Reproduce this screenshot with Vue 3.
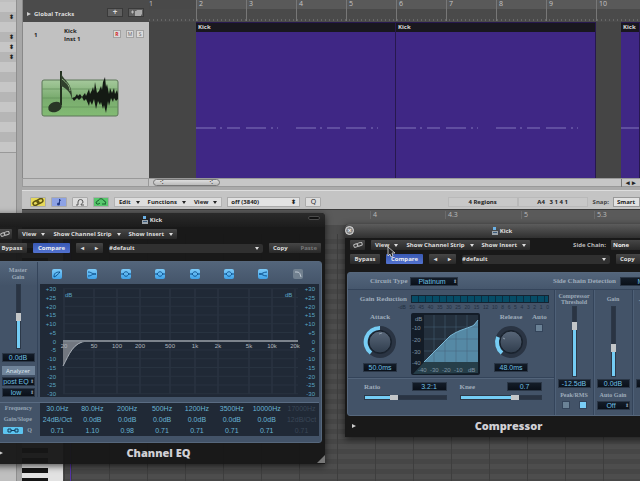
<script setup>
import { ref } from 'vue'

const bars = ['2', '3', '4', '5', '6', '7', '8', '9', '10']
const beats = [
  { x: 305, label: '4' },
  { x: 380, label: '4.3' },
  { x: 456, label: '5' },
  { x: 529, label: '5.3' }
]
const plugins = [
  { id: 'eq', name: 'Channel EQ' },
  { id: 'comp', name: 'Compressor' }
]
const bands = ['cut', 'shelf', 'bell', 'bell', 'bell', 'bell', 'high', 'off']
const bandPaths = {
  cut: 'M2 8C2 4 4 3 8 3M2 8C5 7 6 5 8 3',
  shelf: 'M1 3C5 3 4 5 9 5M1 7C5 7 4 5 9 5',
  bell: 'M0 5h2C4 2 6 2 8 5h2M2 5C4 8 6 8 8 5',
  high: 'M1 5C5 5 5 3 9 3M1 5C5 5 5 7 9 7',
  off: 'M2 3h2C7 3 7 5 8 8'
}
const table = [
  { label: 'Frequency', cells: ['30.0Hz', '80.0Hz', '200Hz', '500Hz', '1200Hz', '3500Hz', '10000Hz', '17000Hz'] },
  { label: 'Gain/Slope', cells: ['24dB/Oct', '0.0dB', '0.0dB', '0.0dB', '0.0dB', '0.0dB', '0.0dB', '12dB/Oct'] },
  { label: 'Q', cells: ['0.71', '1.10', '0.98', '0.71', '0.71', '0.71', '0.71', '0.71'] }
]
const gains = ['+30', '+25', '+20', '+15', '+10', '+5', '0', '-5', '-10', '-15', '-20', '-25', '-30']
const freqs = [
  [24, '20'], [54, '50'], [77, '100'], [100, '200'], [130, '500'],
  [155, '1k'], [178, '2k'], [209, '5k'], [232, '10k'], [255, '20k']
]
const reduction = ['-dB', '50', '45', '40', '35', '30', '25', '20', '15', '12', '10', '8', '6', '5', '4', '3', '2', '1', '0']
const gridX = [434, 445, 456, 467]

const master = ref(50)
const threshold = ref(76)
const makeup = ref(39)
const limiter = ref(90)
const ratio = ref(34)
const knee = ref(69)
const auto = ref(false)
const detect = ref('rms')
</script>

<template>
  <div class="desktop">
    <aside class="sidebar">
      <div class="stripes">
        <span v-for="n in 15" :key="n" class="stripe">{{ [2, 4, 5, 6].includes(n) ? '⬍' : '' }}</span>
      </div>
    </aside>

    <main class="main">
      <section class="arrange">
        <div class="tracks">
          <header class="tracks-head">
            <span class="global"><i class="tri"></i>Global Tracks</span>
            <button class="head-btn" aria-label="Add track">+</button>
            <button class="head-btn" aria-label="Duplicate track">
              <svg width="12" height="7" viewBox="0 0 12 7"><path d="M1 3h3M2.500 1.500v3" stroke="#bbb" /><path d="M5 2h6v5H5zM6 1h6v5" fill="#aaa" /></svg>
            </button>
          </header>
          <article class="track">
            <div class="track-info">
              <span class="track-no">1</span>
              <span class="track-name">Kick<br />Inst 1</span>
              <span class="track-btns">
                <button class="rec">R</button><button>M</button><button>S</button>
              </span>
            </div>
            <svg class="track-icon" width="80" height="48" viewBox="0 0 80 48">
              <defs>
                <linearGradient id="leaf" x1="0" y1="0" x2="0" y2="1">
                  <stop offset="0" stop-color="#a5c99c" /><stop offset="0.500" stop-color="#79ab6e" /><stop offset="1" stop-color="#82bb73" />
                </linearGradient>
              </defs>
              <rect x="2" y="10" width="76" height="36" rx="2" fill="url(#leaf)" stroke="#5d7758" />
              <path d="M2 19h76M2 28h76M2 37h76" stroke="#638f5a" stroke-width="0.700" />
              <path d="M35 27l2-3 1 2 2-2 2 3 3-4 1 3 3-7 1 5 2-4 1-3 1 4 1-9 2 11 2-2 2-5 1 4 1-8 2-5 1 10 1-3 2 10 1-6 2 5 2-5 1 6 2-4 1 4v5l-2 2-2-3-1 4-2-4-2 8-1-5-2 12-2-8-1 4-2-7-1 3-2-4-2 8-2-10-2 6-2-4-1 5-3-7-2 2-2-4-3 3-2-2-3 3-2-3z" fill="#141a14" />
              <path d="M21 1v34" stroke="#22301f" stroke-width="2" />
              <path d="M21 2c1 9 12 8 11 28-1-9-7-12-11-14z" fill="#30402c" /><path d="M22 9c5 4 8 7 8 12" stroke="#91b784" fill="none" />
              <ellipse cx="15" cy="37" rx="7" ry="5" transform="rotate(-20 15 37)" fill="#293526" />
            </svg>
          </article>
        </div>

        <div class="timeline">
          <div class="ruler">
            <span class="bar first">1</span>
            <span v-for="b in bars" :key="b" class="bar">{{ b }}</span>
          </div>
          <div class="lane">
            <div v-for="n in 3" :key="n" class="region" :class="'r' + n">
              <div class="region-head">Kick</div>
              <svg class="notes" width="200" height="2" viewBox="0 0 200 2"><path d="M0 1h20M24 1h2M31 1h13M50 1h20M75 1h2M81 1h1M100 1h20M124 1h2M131 1h13M150 1h20M175 1h2M181 1h1" stroke="#8276bb" /></svg>
            </div>
          </div>
        </div>

        <div class="scroll-left"></div>
        <div class="scroll-row">
          <span class="scroll-thumb"><i>⁖</i><i>⁖</i></span>
          <span class="scroll-arrows">◂ ▸</span>
        </div>
      </section>

      <nav class="toolbar">
        <button class="tool yellow" aria-label="Link"><svg width="12" height="8" viewBox="0 0 12 8"><g fill="none" stroke="#5b5210" stroke-width="1.500"><rect x="1" y="3" width="6" height="4" rx="2" transform="rotate(-25 4 5)" /><rect x="5" y="1" width="6" height="4" rx="2" transform="rotate(-25 8 3)" /></g></svg></button>
        <button class="tool blue" aria-label="MIDI out"><svg width="8" height="8" viewBox="0 0 8 8"><path d="M4.500 1v5M4.500 1l1 2" stroke="#223a86" /><circle cx="3.500" cy="6" r="1.500" fill="#223a86" /></svg></button>
        <button class="tool" aria-label="MIDI in"><svg width="10" height="8" viewBox="0 0 10 8"><path d="M3 7H1M3 7V4a2 2 0 0 1 5 0c0 2-2 1-2 3h3" fill="none" stroke="#555" /></svg></button>
        <button class="tool green" aria-label="Catch"><svg width="12" height="8" viewBox="0 0 12 8"><path d="M1 5C1 3 3 3 3 3C4 0 8 0 9 3C11 3 11 5 10 6M1 5C2 7 4 6 5 5M7 6h4" fill="none" stroke="#17622c" /></svg></button>
        <div class="menu-group">
          <button>Edit<i class="down"></i></button><button>Functions<i class="down"></i></button><button>View<i class="down"></i></button>
        </div>
        <span class="picker division"><select aria-label="Division"><option>off (3840)</option></select><i>⬍</i></span>
        <button class="tool q">Q</button>
        <div class="status"><span>4 Regions</span><span class="pos">A4 &nbsp; 3 1 4 1</span></div>
        <label class="snap">Snap: <select><option>Smart</option></select></label>
      </nav>

      <section class="roll">
        <div class="roll-ruler">
          <span v-for="b in beats" :key="b.label" class="beat" :style="{ left: b.x + 'px' }">{{ b.label }}</span>
        </div>
        <div class="roll-body">
          <div class="keys"></div>
          <div class="grid"><i class="playhead"></i></div>
        </div>
      </section>
    </main>

    <section v-for="p in plugins" :key="p.id" class="window" :class="p.id">
      <header class="titlebar">
        <button v-if="p.id === 'comp'" class="close" aria-label="Close">×</button>
        <svg width="6" height="8" viewBox="0 0 6 8"><path d="M1 0h3v3H1z" fill="#6bb1e6" /><path d="M0 4h6v4H0z" fill="#9aa3ab" /><path d="M1 5h4v1H1z" fill="#38597a" /></svg>
        <span>Kick</span>
        <i v-if="p.id === 'eq'" class="pill"></i>
      </header>
      <div class="row">
        <button class="dark link" aria-label="Link"><svg width="10" height="6" viewBox="0 0 10 6"><g fill="none" stroke="#bbb"><rect x="1" y="2" width="4" height="3" rx="1" transform="rotate(-20 3 4)" /><rect x="4" y="1" width="5" height="3" rx="1" transform="rotate(-20 6 2)" /></g></svg></button>
        <div class="dark group">
          <button>View<i class="down"></i></button><button>Show Channel Strip<i class="down"></i></button><button>Show Insert<i class="down"></i></button>
        </div>
        <label v-if="p.id === 'comp'" class="side">Side Chain: <select class="dark"><option>None</option></select></label>
      </div>
      <div class="row">
        <button class="dark bypass">Bypass</button>
        <button class="compare">Compare</button>
        <div class="dark group arrows"><button aria-label="Previous">◂</button><button aria-label="Next">▸</button></div>
        <span class="preset"><select aria-label="Preset"><option>#default</option></select><i class="down"></i></span>
        <div class="dark group copy"><button>Copy</button><button class="dim">Paste</button></div>
      </div>

      <div v-if="p.id === 'eq'" class="panel eq-panel">
        <div class="eq-side">
          <label class="cap" for="master">Master<br />Gain</label>
          <input id="master" v-model="master" class="v master" type="range" :style="{ '--v': master + '%' }" />
          <output class="lcd">0.0dB</output>
          <button class="analyzer">Analyzer</button>
          <span class="lcd sel"><select aria-label="Analyzer position"><option>post EQ</option></select><i>⬍</i></span>
          <span class="lcd sel"><select aria-label="Resolution"><option>low</option></select><i>⬍</i></span>
        </div>
        <div class="eq-main">
          <div class="bands">
            <button v-for="(b, i) in bands" :key="i" :class="{ dimmed: b === 'off' }" :aria-label="'Band ' + (i + 1)">
              <svg width="10" height="10" viewBox="0 0 10 10"><path :d="bandPaths[b]" fill="none" :stroke="b === 'off' ? '#c0c9d4' : '#0c5390'" /></svg>
            </button>
          </div>
          <svg class="eq-graph" viewBox="0 0 279 113">
            <path v-for="f in freqs" :key="f[1]" :d="'M' + f[0] + ' 5V110'" stroke="#2e3947" />
            <path v-for="n in 13" :key="n" :d="'M23 ' + (n * 8.75 - 4) + 'H258'" stroke="#283340" />
            <path d="M23 57v25C29 71 33 59 47 57z" fill="#727780" /><path d="M23 82C29 71 33 58 47 57" fill="none" stroke="#a9b0b8" />
            <path d="M23 57H258" stroke="#7c838c" stroke-width="2" />
            <g v-for="(g, i) in gains" :key="g" class="scale">
              <text x="16" :y="i * 8.75 + 7" text-anchor="end">{{ g }}</text>
              <text x="275" :y="i * 8.75 + 7" text-anchor="end">{{ g }}</text>
            </g>
            <g class="scale"><text x="25" y="13">dB</text><text x="245" y="13">dB</text></g>
            <g class="freq"><text v-for="f in freqs" :key="f[1]" :x="f[0]" y="64" text-anchor="middle">{{ f[1] }}</text></g>
          </svg>
        </div>
        <table class="params">
          <tbody>
            <tr v-for="r in table" :key="r.label">
              <th scope="row"><svg v-if="r.label === 'Q'" width="20" height="7" viewBox="0 0 20 7"><rect width="20" height="7" rx="1" fill="#5cc4f0" /><path d="M5 2h3v3H5zM12 2h3v3h-3zM8 3.500h4" fill="none" stroke="#113c5c" /></svg>{{ r.label }}</th>
              <td v-for="(c, i) in r.cells" :key="i">{{ c }}</td>
            </tr>
          </tbody>
        </table>
      </div>

      <div v-else class="panel comp-panel">
        <div class="circuit">
          <label class="cap" for="circuit">Circuit Type</label>
          <span class="lcd sel platinum"><select id="circuit"><option>Platinum</option></select><i>⬍</i></span>
          <label class="cap detection" for="detection">Side Chain Detection</label>
          <span class="lcd sel max"><select id="detection"><option>Max</option></select></span>
        </div>
        <div class="comp-body">
          <div class="comp-left">
            <div class="reduction">
              <span class="cap">Gain Reduction</span>
              <div class="meter"></div>
            </div>
            <div class="meter-scale"><span v-for="r in reduction" :key="r">{{ r }}</span></div>
            <div class="dynamics">
              <div class="knob">
                <span class="cap">Attack</span>
                <svg width="34" height="34" viewBox="0 0 34 34">
                  <circle cx="17" cy="17" r="14" fill="#1c2632" stroke="#2a3443" stroke-width="4" />
                  <path d="M8 28A14 14 0 0 1 17 3" fill="none" stroke="#77cdf4" stroke-width="4" />
                  <circle cx="17" cy="17" r="11" fill="url(#metal)" stroke="#18202b" /><path d="M16 9l3-1" stroke="#8c9aa8" />
                </svg>
                <output class="lcd">50.0ms</output>
              </div>
              <svg class="curve" width="69" height="62" viewBox="411 313 69 62">
                <defs>
                  <linearGradient id="metal" x1="0" y1="0" x2="0" y2="1"><stop offset="0" stop-color="#596779" /><stop offset="1" stop-color="#303d4d" /></linearGradient>
                </defs>
                <rect x="411" y="313" width="69" height="62" rx="2" fill="#131c27" />
                <path d="M424 315h54v47h-54z" fill="#24303d" />
                <path d="M424 362L450 336C460 329 470 328 474 325L478 320V362z" fill="#5589a5" />
                <path v-for="x in gridX" :key="x" :d="'M' + x + ' 315V362'" stroke="#44627a" stroke-width="0.500" />
                <path d="M424 327h54M424 339h54M424 351h54" stroke="#44627a" stroke-width="0.500" />
                <path d="M424 362L450 336C460 329 470 328 474 325L478 320" fill="none" stroke="#7cb9d7" />
                <path d="M413 374l11-12h54v11z" fill="#263e49" />
                <g class="curve-text">
                  <text x="415" y="321">dB</text><text x="412" y="330">-10</text><text x="412" y="342">-20</text><text x="412" y="354">-30</text><text x="412" y="365">-40</text>
                  <text x="418" y="372">-40</text><text x="430" y="372">-30</text><text x="442" y="372">-20</text><text x="454" y="372">-10</text><text x="468" y="372">dB</text>
                </g>
              </svg>
              <div class="knob">
                <span class="cap">Release</span>
                <svg width="34" height="34" viewBox="0 0 34 34">
                  <circle cx="17" cy="17" r="14" fill="#1c2632" stroke="#2a3443" stroke-width="4" />
                  <path d="M8 28A14 14 0 0 1 4 12" fill="none" stroke="#77cdf4" stroke-width="4" />
                  <circle cx="17" cy="17" r="11" fill="url(#metal)" stroke="#18202b" /><path d="M9 13l2 1" stroke="#8c9aa8" />
                </svg>
                <output class="lcd">48.0ms</output>
              </div>
              <label class="cap auto">Auto<input v-model="auto" type="checkbox" class="tick" /></label>
            </div>
            <div class="sliders">
              <div class="hslider">
                <div><label class="cap" for="ratio">Ratio</label><output class="lcd">3.2:1</output></div>
                <input id="ratio" v-model="ratio" class="h" type="range" :style="{ '--v': ratio + '%' }" />
              </div>
              <div class="hslider">
                <div><label class="cap" for="knee">Knee</label><output class="lcd">0.7</output></div>
                <input id="knee" v-model="knee" class="h" type="range" :style="{ '--v': knee + '%' }" />
              </div>
            </div>
          </div>
          <div class="strip">
            <label class="cap" for="threshold">Compressor<br />Threshold</label>
            <input id="threshold" v-model="threshold" class="v" type="range" :style="{ '--v': threshold + '%' }" />
            <output class="lcd">-12.5dB</output>
            <span class="cap foot">Peak/RMS</span>
            <div class="ticks">
              <input v-model="detect" type="radio" value="peak" class="tick" aria-label="Peak" />
              <input v-model="detect" type="radio" value="rms" class="tick" aria-label="RMS" />
            </div>
          </div>
          <div class="strip">
            <label class="cap" for="makeup">Gain</label>
            <input id="makeup" v-model="makeup" class="v" type="range" :style="{ '--v': makeup + '%' }" />
            <output class="lcd">0.0dB</output>
            <label class="cap foot" for="autogain">Auto Gain</label>
            <span class="lcd sel"><select id="autogain"><option>Off</option></select><i>⬍</i></span>
          </div>
          <div class="strip">
            <label class="cap" for="limiter">Limiter<br />Threshold</label>
            <input id="limiter" v-model="limiter" class="v" type="range" :style="{ '--v': limiter + '%' }" />
            <output class="lcd">0.0dB</output>
            <span class="cap foot">Limiter</span>
          </div>
        </div>
      </div>

      <footer class="foot-bar"><i class="tri"></i><strong>{{ p.name }}</strong><i v-if="p.id === 'eq'" class="grip"></i></footer>
    </section>

    <svg class="cursor" width="8" height="12" viewBox="0 0 8 12"><path d="M1 1v9l2-2 1 3 2-1-1-3h3z" fill="#222" stroke="#ddd" stroke-width="0.800" /></svg>
  </div>
</template>

<style>
body { margin: 0; background: #484848; }
</style>

<style scoped>
* { box-sizing: border-box; }
i { font-style: normal; }
button, select, input { font: inherit; color: inherit; margin: 0; padding: 0; border: 0; background: none; appearance: none; border-radius: 0; }
button { display: flex; align-items: center; justify-content: center; white-space: nowrap; }
.desktop { position: relative; display: flex; min-height: 100vh; overflow: hidden; background: #a7a7a7; font: bold 6px/8px "Open Sans", "Noto Sans", sans-serif; color: #222; }
.sidebar { width: 17px; margin-right: 5px; background: #bfbfbf; border-right: 1px solid #8f8f8f; }
.stripes { border-bottom: 1px solid #999; padding-top: 2px; }
.stripe { display: block; height: 10px; padding-left: 9px; line-height: 10px; background: #c6c6c6; }
.stripe:nth-child(even) { background: #b6b6b6; }
.main { flex: 1; min-width: 0; display: flex; flex-direction: column; }

.arrange { display: grid; grid-template-columns: 127px 1fr; grid-template-rows: 178px 9px; background: #aaa; padding-bottom: 3px; }
.tracks { display: flex; flex-direction: column; border-left: 1px solid #888; }
.tracks-head { display: flex; align-items: center; gap: 5px; height: 22px; padding: 5px 5px 0 4px; background: #4b4b4b; color: #ddd; }
.global { flex: 1; display: flex; align-items: center; gap: 3px; white-space: nowrap; }
.tri { width: 0; border: 2px solid transparent; border-left: 4px solid #ccc; border-right: 0; }
.head-btn { width: 16px; height: 9px; margin-bottom: 3px; border: 1px solid #3a3a3a; background: #5f5f5f; color: #ddd; font-size: 8px; }
.track { flex: 1; background: #c1c1c1; }
.track-info { display: flex; align-items: flex-start; padding: 5px 5px 0 11px; height: 48px; }
.track-no { width: 30px; padding-top: 4px; }
.track-name { flex: 1; }
.track-btns { display: flex; gap: 2px; padding-top: 3px; font-weight: 400; font-size: 5px; }
.track-btns button { width: 8px; height: 8px; background: #dadada; border: 1px solid #a2a2a2; color: #666; }
.track-btns .rec { color: #d02020; margin-right: 3px; font-weight: 700; }
.track-icon { display: block; margin-left: 17px; }
.timeline { display: flex; flex-direction: column; min-width: 0; overflow: hidden; background: #454545; }
.ruler { display: flex; height: 22px; flex: none; font-weight: 400; font-size: 7px; color: #c5c5c5; background: repeating-linear-gradient(90deg, #666 0 1px, transparent 1px 4px) 0 19px / 100% 2px no-repeat, linear-gradient(#595959 9px, #4a4a4a 9px); }
.bar { flex: none; width: 50px; height: 21px; padding-left: 2px; line-height: 8px; border-left: 1px solid #777; }
.bar.first { width: 47px; height: 9px; padding-left: 0; border: 0; background: #494949; }
.lane { flex: 1; display: flex; padding-left: 47px; }
.region { flex: none; width: 200px; overflow: hidden; background: #3f2785; border: 1px solid #27184e; border-width: 1px 1px 0 0; }
.region-head { height: 9px; padding-left: 2px; line-height: 9px; background: #19171f; color: #ddd; }
.r3 { width: auto; flex: 1; margin-left: 25px; }
.notes { display: block; margin-top: 95px; }
.scroll-left { background: #c2c2c2; border: 1px solid #999; }
.scroll-row { display: flex; justify-content: space-between; align-items: center; background: #c6c6c6; border: 1px solid #999; border-width: 1px 0; padding-left: 4px; }
.scroll-thumb { display: flex; justify-content: space-between; width: 67px; height: 7px; padding: 0 6px; border: 1px solid #777; border-radius: 4px; background: linear-gradient(#ddd, #bbb); line-height: 5px; }
.scroll-arrows { padding: 0 4px; border-left: 1px solid #777; font-size: 7px; }

.toolbar { display: flex; align-items: center; gap: 5px; height: 19px; padding: 4px 0 0 8px; background: #c4c4c4; border-top: 1px solid #ddd; white-space: nowrap; }
.tool { width: 16px; height: 10px; border: 1px solid #aaa; background: #dcdcdc; border-radius: 1px; }
.yellow { background: #e5d85a; } .blue { background: #8da2e4; } .green { background: #57c76c; }
.menu-group { display: flex; height: 10px; background: #dedede; border: 1px solid #b2b2b2; }
.menu-group button { padding: 0 4px; gap: 5px; }
.down { width: 0; border: 2px solid transparent; border-top: 3px solid currentColor; border-bottom: 0; }
.picker { display: flex; align-items: center; height: 10px; padding: 0 3px; background: #e2e2e2; border: 1px solid #aaa; }
.division { width: 73px; }
.picker select { flex: 1; }
.q { font-weight: 400; font-size: 7px; }
.status { display: flex; margin-left: auto; }
.status span { width: 70px; height: 10px; text-align: center; border: 1px solid #b9b9b9; background: #c8c8c8; }
.snap { display: flex; align-items: center; gap: 4px; color: #444; }
.snap select { width: 27px; height: 10px; padding-left: 3px; background: #e2e2e2; border: 1px solid #999; color: #222; }

.roll { flex: 1; display: flex; flex-direction: column; background: #484848; border-top: 1px solid #3b3b3b; }
.roll-ruler { position: relative; height: 24px; background: linear-gradient(#5a5a5a 15px, #4c4c4c 15px); color: #bbb; font-weight: 400; font-size: 7px; }
.beat { position: absolute; top: 1px; padding-left: 2px; margin-left: 43px; border-left: 1px solid #6b6b6b; }
.roll-body { flex: 1; display: flex; }
.keys { width: 41px; background: repeating-linear-gradient(#e2e2e2 0 4px, #151515 4px 9px, #e2e2e2 9px 10px) 0 0 / 26px 100% no-repeat, #e2e2e2; }
.grid { flex: 1; padding-left: 7px; background: repeating-linear-gradient(90deg, #3e3e3e 0 1px, transparent 1px 38px) 8px 0, repeating-linear-gradient(#4d4d4d 0 5px, #464646 5px 10px); }
.playhead { display: block; width: 1px; height: 100%; background: #5533a8; }

.window { position: absolute; background: #191919; border-radius: 4px 4px 0 0; box-shadow: 0 2px 7px #000a; color: #ddd; }
.window.eq { left: -8px; top: 213px; width: 333px; background: #171717f5; }
.window.comp { left: 345px; top: 224px; width: 327px; }
.titlebar { position: relative; display: flex; align-items: center; justify-content: center; gap: 2px; height: 14px; padding-right: 13px; border-radius: 4px 4px 0 0; background: linear-gradient(#2b2b2b, #1c1c1c); }
.comp .titlebar { background: linear-gradient(#5c5c5c, #303030); }
.close { position: absolute; left: 0; top: 2px; width: 9px; height: 9px; border-radius: 5px; border: 1px solid #ddd; background: #888; color: #eee; font-size: 7px; line-height: 7px; }
.pill { position: absolute; right: 5px; top: 3px; width: 12px; height: 4px; border-radius: 2px; background: #111; border: 1px solid #4a4a4a; }
.row { display: flex; align-items: center; gap: 6px; height: 14px; padding: 0 4px 0 5px; white-space: nowrap; }
.dark { height: 10px; background: linear-gradient(#464646, #292929); border-radius: 1px; }
.link { width: 15px; }
.group { display: flex; }
.group button { gap: 5px; padding: 0 4px; }
.bypass { width: 30px; }
.compare { width: 37px; height: 10px; border-radius: 1px; background: linear-gradient(#3959b3, #5272cf); color: #eee; }
.arrows { width: 27px; justify-content: space-around; }
.preset { flex: 1; display: flex; align-items: center; height: 9px; padding: 0 4px 0 0; background: #303030; border-radius: 2px; }
.preset select { flex: 1; }
.copy { width: 52px; justify-content: space-between; }
.dim { color: #777; }
.side { display: flex; align-items: center; gap: 5px; margin-left: auto; color: #bbb; }
.side select { width: 57px; padding-left: 2px; color: #eee; }

.panel { margin: 6px 3px 0 2px; border-radius: 3px; background: #435368; border: 1px solid #56677c; color: #97a6b7; }
.cap { font: bold 6px/6px "Liberation Serif", serif; color: #9eabba; text-align: center; white-space: nowrap; }
.lcd { display: block; width: 33px; height: 9px; background: linear-gradient(#131c28, #0a1019); border: 1px solid #2b3747; color: #70c0e4; font: 7px/7px "Liberation Sans", sans-serif; text-align: center; white-space: nowrap; overflow: hidden; }
.sel { display: flex; align-items: center; }
.sel select { flex: 1; min-width: 0; height: 7px; line-height: 7px; text-align: center; text-align-last: center; }
.sel i { font-size: 5px; color: #8595a5; }

.eq-panel { display: grid; grid-template-columns: 43px 1fr; padding: 0 2px 6px 0; background: linear-gradient(#53657b, #435368 24px); }
.eq-side { display: flex; flex-direction: column; align-items: center; padding: 5px 0 0 4px; border-right: 1px solid #34445a; }
.eq-side .cap { line-height: 7px; }
.eq-side .master { height: 65px; margin: 3px 0 4px; }
.eq-side > .lcd { margin-bottom: 2px; }
.eq-side > .lcd:last-child { margin-bottom: 0; }
.analyzer { width: 33px; height: 9px; margin: 2px 0; background: #70849a; color: #dfe8ef; font-weight: 400; }
.eq-main { padding-left: 2px; }
.bands { display: grid; grid-template-columns: repeat(8, 1fr); height: 22px; padding: 7px 4px 0 0; justify-items: center; }
.bands button { width: 10px; height: 10px; border-radius: 2px; background: linear-gradient(#7dcaf8, #3fa2e8); }
.bands .dimmed { background: #71808f; }
.eq-graph { display: block; width: 100%; background: #202936; }
.scale text { font: 6px "Liberation Sans", sans-serif; fill: #5ba6c4; }
.freq text { font: 6px "Liberation Sans", sans-serif; fill: #b0b6bd; }
.params { grid-column: 1 / 3; width: 100%; margin-top: 5px; border-collapse: collapse; table-layout: fixed; border-top: 1px solid #5a6c83; font: 7px/11px "Liberation Sans", sans-serif; color: #68b4d3; }
.params th { width: 45px; height: 11px; padding: 0 8px 0 0; font: bold 6px/11px "Liberation Serif", serif; color: #93a3b4; text-align: right; white-space: nowrap; }
.params th svg { margin-right: 4px; vertical-align: middle; }
.params td { padding: 0; height: 11px; text-align: center; background: #202936; white-space: nowrap; }
.params td:last-child { color: #3a4757; }

.circuit { display: flex; align-items: center; height: 17px; padding-left: 22px; border-bottom: 1px solid #34445a; background: linear-gradient(#53657b, #46576d); }
.circuit .cap { font-size: 7px; width: 36px; text-align: right; }
.platinum { width: 48px; margin-left: 4px; }
.circuit .detection { margin-left: auto; width: auto; }
.circuit .max { width: 48px; margin-left: 4px; }
.comp-body { display: grid; grid-template-columns: 206px repeat(3, 39px); height: 125px; }
.comp-left { display: flex; flex-direction: column; }
.reduction { display: flex; align-items: center; gap: 4px; padding: 5px 5px 0 0; }
.reduction .cap { width: 59px; text-align: right; font-size: 7px; }
.meter { flex: 1; height: 8px; border: 1px solid #152331; background: repeating-linear-gradient(90deg, #064c66 0 6px, #0a2d42 6px 7px); }
.meter-scale { display: flex; justify-content: space-between; padding: 1px 5px 0 50px; font: 5px/7px "Liberation Sans", sans-serif; color: #222f40; }
.dynamics { display: flex; gap: 14px; padding: 2px 0 2px 15px; align-items: flex-start; }
.knob { display: flex; flex-direction: column; align-items: center; width: 34px; }
.knob .cap, .auto { font-size: 7px; line-height: 8px; }
.knob svg { margin: 4px 0; }
.knob .lcd { width: 34px; }
.curve-text text { font: 6px "Liberation Sans", sans-serif; fill: #7e93a3; }
.auto { display: flex; flex-direction: column; align-items: center; gap: 3px; margin-left: -10px; }
.tick { width: 8px; height: 8px; background: #6b8296; border: 1px solid #34445a; }
.tick:checked { background: #79cdf6; }
.sliders { flex: 1; display: grid; grid-template-columns: 1fr 1fr; gap: 13px; padding: 4px 12px 0 16px; border-top: 1px solid #34445a; box-shadow: inset 0 1px #53647a; }
.hslider > div { display: flex; justify-content: space-between; align-items: center; margin-bottom: 4px; }
.hslider .cap { font-size: 7px; }
.hslider .lcd { width: 35px; }
.h { display: block; width: 100%; height: 5px; border: 1px solid #2c3848; background: linear-gradient(90deg, #74cdf5 var(--v), #2a3443 var(--v)); }
.h::-webkit-slider-thumb { appearance: none; width: 8px; height: 5px; background: #c3c6c8; }
.v { writing-mode: vertical-lr; direction: rtl; width: 5px; border: 1px solid #2c3848; background: linear-gradient(0deg, #74cdf5 var(--v), #2a3443 var(--v)); }
.v::-webkit-slider-thumb { appearance: none; width: 5px; height: 8px; background: #c3c6c8; }
.strip { display: flex; flex-direction: column; align-items: center; padding-top: 3px; border-left: 1px solid #34445a; box-shadow: inset 1px 0 #4e6077; }
.strip > .cap:first-child { display: flex; align-items: center; justify-content: center; height: 12px; }
.strip .v { height: 71px; margin: 1px 0 2px; }
.strip .foot { height: 8px; line-height: 8px; margin: 3px 0 2px; }
.ticks { display: flex; gap: 9px; }

.foot-bar { position: relative; display: flex; align-items: center; justify-content: center; height: 21px; padding-bottom: 1px; font-size: 11px; color: #d0d0d5; }
.foot-bar .tri { position: absolute; left: 7px; }
.grip { position: absolute; right: 0; bottom: 1px; border: 4px solid #777; border-top-color: transparent; border-left-color: transparent; }
.cursor { position: absolute; left: 387px; top: 246px; }
</style>
